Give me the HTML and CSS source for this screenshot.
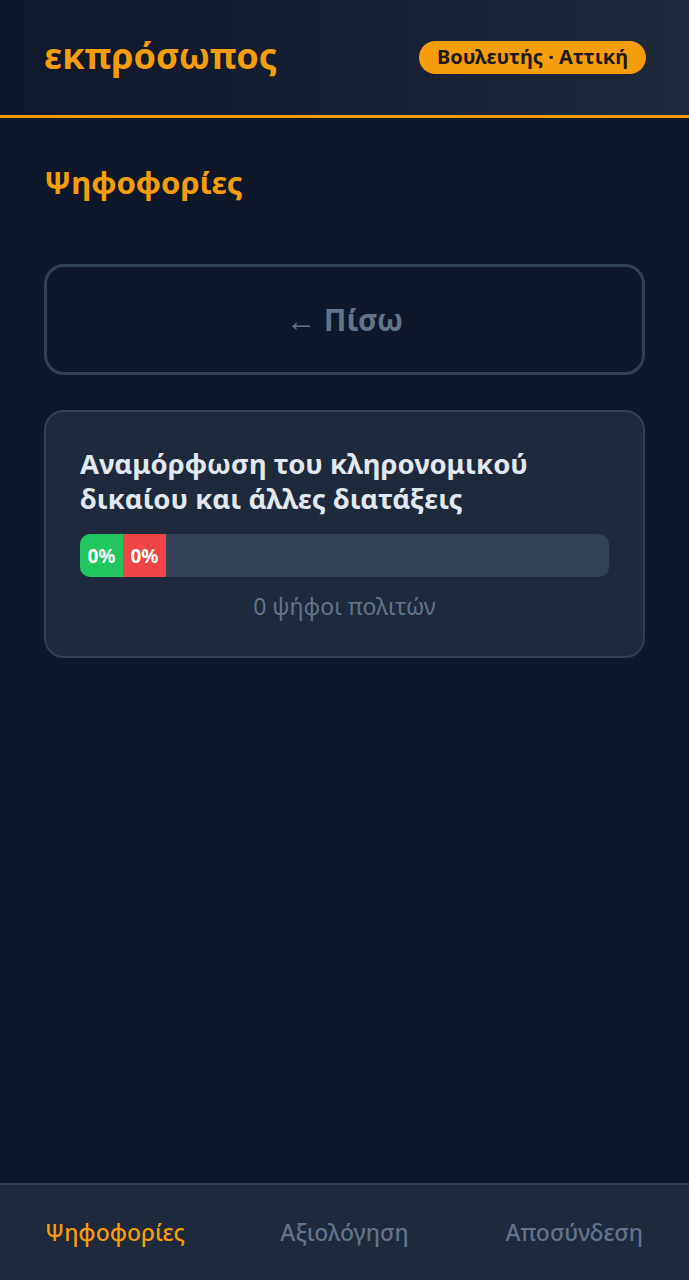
FILE: index.html
```html
<!DOCTYPE html>
<html lang="el">
<head>
    <meta charset="UTF-8">
    <meta name="viewport" content="width=device-width, initial-scale=1.0">
    <title>εκπρόσωπος</title>
    <link rel="stylesheet" href="styles.css">
</head>
<body>
    <div class="app">
        <!-- Κεφαλίδα -->
        <header class="topbar">
            <div class="logo">εκπρόσωπος</div>
            <span class="badge">Βουλευτής · Αττική</span>
        </header>

        <!-- Περιεχόμενο -->
        <main class="content">
            <h1 class="page-title">Ψηφοφορίες</h1>

            <button class="back-btn">← Πίσω</button>

            <div class="vote-card">
                <h2 class="vote-title">Αναμόρφωση του κληρονομικού δικαίου και άλλες διατάξεις</h2>
                <div class="bar">
                    <span class="seg yes">0%</span>
                    <span class="seg no">0%</span>
                </div>
                <div class="vote-count">0 ψήφοι πολιτών</div>
            </div>
        </main>

        <!-- Κάτω μενού -->
        <nav class="bottom-nav">
            <a class="nav-item active">Ψηφοφορίες</a>
            <a class="nav-item">Αξιολόγηση</a>
            <a class="nav-item">Αποσύνδεση</a>
        </nav>
    </div>
</body>
</html>
```

FILE: styles.css
```css
/* Βασικά */
* {
    box-sizing: border-box;
}

body {
    margin: 0;
    font-family: "Noto Sans", Roboto, sans-serif;
    background-color: #0f172a;
    color: #e2e8f0;
}

.app {
    display: flex;
    flex-direction: column;
    min-height: 100vh;
}

/* Κεφαλίδα */
.topbar {
    display: flex;
    justify-content: space-between;
    align-items: center;
    height: 118px;
    padding: 0 43px 3px 44px;
    background: linear-gradient(90deg, #0f172a 0%, #1e293b 100%);
    border-bottom: 3px solid #f59e0b;
}

.logo {
    color: #f59e0b;
    font-size: 36px;
    font-weight: 700;
    line-height: 40px;
}

.badge {
    background-color: #f59e0b;
    color: #1e1b16;
    font-size: 20px;
    font-weight: 700;
    line-height: 24px;
    padding: 4px 18px 5px;
    border-radius: 20px;
    margin-top: 3px;
}

/* Περιεχόμενο */
.content {
    flex: 1;
    padding: 44px 44px 0;
}

.page-title {
    margin: 0 0 62px;
    color: #f59e0b;
    font-size: 31px;
    font-weight: 700;
    line-height: 40px;
}

.back-btn {
    display: block;
    width: 100%;
    height: 111px;
    background: transparent;
    border: 3px solid #334155;
    border-radius: 20px;
    color: #64748b;
    font-family: inherit;
    font-size: 30px;
    font-weight: 700;
    cursor: pointer;
}

.vote-card {
    margin-top: 35px;
    background-color: #1e293b;
    border: 2px solid #334155;
    border-radius: 20px;
    padding: 34px 34px 34px 34px;
}

.vote-title {
    margin: 0 0 18px;
    font-size: 27.5px;
    font-weight: 700;
    line-height: 35px;
    color: #e2e8f0;
}

.bar {
    display: flex;
    height: 43px;
    background-color: #334155;
    border-radius: 10px;
    overflow: hidden;
}

.seg {
    display: flex;
    align-items: center;
    justify-content: center;
    width: 43px;
    color: #ffffff;
    font-size: 19px;
    font-weight: 700;
}

.seg.yes {
    background-color: #22c55e;
}

.seg.no {
    background-color: #ef4444;
}

.vote-count {
    margin-top: 13px;
    text-align: center;
    color: #64748b;
    font-size: 23px;
    line-height: 32px;
}

/* Κάτω μενού */
.bottom-nav {
    display: grid;
    grid-template-columns: repeat(3, 1fr);
    align-items: center;
    height: 97px;
    background-color: #1e293b;
    border-top: 2px solid #334155;
    padding-bottom: 2px;
}

.nav-item {
    text-align: center;
    color: #64748b;
    font-size: 23px;
    font-weight: 500;
}

.nav-item.active {
    color: #f59e0b;
}
```
